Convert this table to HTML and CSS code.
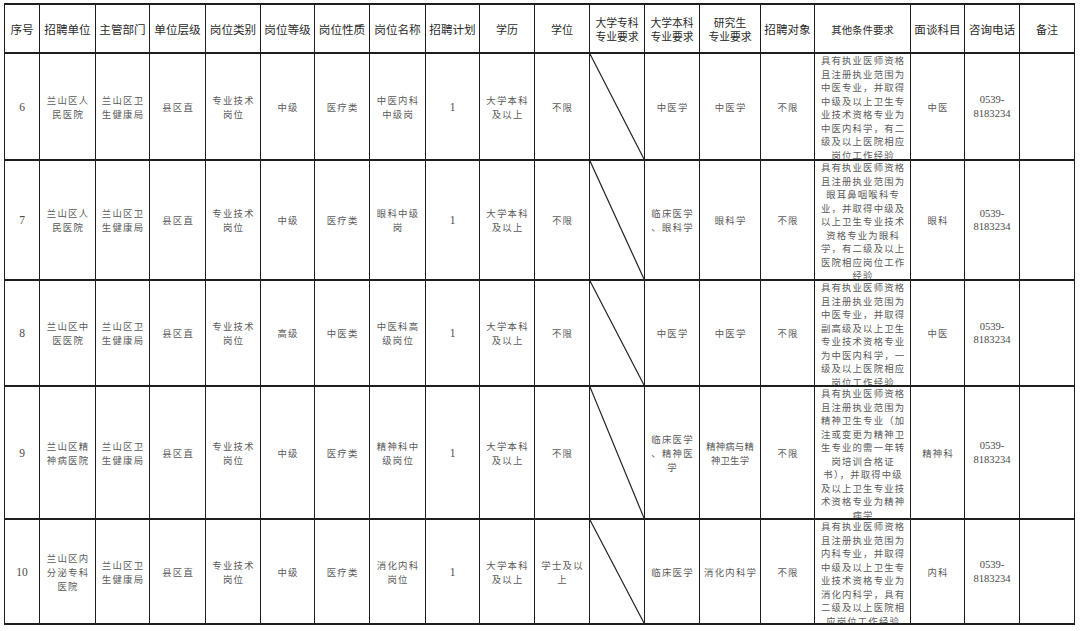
FILE: index.html
```html
<!DOCTYPE html>
<html lang="zh-CN">
<head>
<meta charset="utf-8">
<title>招聘岗位表</title>
<link rel="stylesheet" href="styles.css">
</head>
<body>
<div class="sheet" role="table">
  <div class="hd">序号</div>
  <div class="hd">招聘单位</div>
  <div class="hd">主管部门</div>
  <div class="hd">单位层级</div>
  <div class="hd">岗位类别</div>
  <div class="hd">岗位等级</div>
  <div class="hd">岗位性质</div>
  <div class="hd">岗位名称</div>
  <div class="hd">招聘计划</div>
  <div class="hd sm">学历</div>
  <div class="hd sm">学位</div>
  <div class="hd two">大学专科<br>专业要求</div>
  <div class="hd two">大学本科<br>专业要求</div>
  <div class="hd two">研究生<br>专业要求</div>
  <div class="hd">招聘对象</div>
  <div class="hd xs">其他条件要求</div>
  <div class="hd">面谈科目</div>
  <div class="hd">咨询电话</div>
  <div class="hd sm">备注</div>

  <!-- row 6 -->
  <div class="td num">6</div>
  <div class="td">兰山区人<br>民医院</div>
  <div class="td">兰山区卫<br>生健康局</div>
  <div class="td">县区直</div>
  <div class="td">专业技术<br>岗位</div>
  <div class="td">中级</div>
  <div class="td">医疗类</div>
  <div class="td">中医内科<br>中级岗</div>
  <div class="td num">1</div>
  <div class="td">大学本科<br>及以上</div>
  <div class="td">不限</div>
  <div class="td slash"><svg viewBox="0 0 100 100" preserveAspectRatio="none"><line x1="0" y1="0" x2="100" y2="100"/></svg></div>
  <div class="td">中医学</div>
  <div class="td">中医学</div>
  <div class="td">不限</div>
  <div class="td other">具有执业医师资格<br>且注册执业范围为<br>中医专业，并取得<br>中级及以上卫生专<br>业技术资格专业为<br>中医内科学，有二<br>级及以上医院相应<br>岗位工作经验</div>
  <div class="td">中医</div>
  <div class="td phone">0539-<br>8183234</div>
  <div class="td"></div>

  <!-- row 7 -->
  <div class="td num">7</div>
  <div class="td">兰山区人<br>民医院</div>
  <div class="td">兰山区卫<br>生健康局</div>
  <div class="td">县区直</div>
  <div class="td">专业技术<br>岗位</div>
  <div class="td">中级</div>
  <div class="td">医疗类</div>
  <div class="td">眼科中级<br>岗</div>
  <div class="td num">1</div>
  <div class="td">大学本科<br>及以上</div>
  <div class="td">不限</div>
  <div class="td slash"><svg viewBox="0 0 100 100" preserveAspectRatio="none"><line x1="0" y1="0" x2="100" y2="100"/></svg></div>
  <div class="td">临床医学<br>、眼科学</div>
  <div class="td">眼科学</div>
  <div class="td">不限</div>
  <div class="td other">具有执业医师资格<br>且注册执业范围为<br>眼耳鼻咽喉科专<br>业，并取得中级及<br>以上卫生专业技术<br>资格专业为眼科<br>学，有二级及以上<br>医院相应岗位工作<br>经验</div>
  <div class="td">眼科</div>
  <div class="td phone">0539-<br>8183234</div>
  <div class="td"></div>

  <!-- row 8 -->
  <div class="td num">8</div>
  <div class="td">兰山区中<br>医医院</div>
  <div class="td">兰山区卫<br>生健康局</div>
  <div class="td">县区直</div>
  <div class="td">专业技术<br>岗位</div>
  <div class="td">高级</div>
  <div class="td">中医类</div>
  <div class="td">中医科高<br>级岗位</div>
  <div class="td num">1</div>
  <div class="td">大学本科<br>及以上</div>
  <div class="td">不限</div>
  <div class="td slash"><svg viewBox="0 0 100 100" preserveAspectRatio="none"><line x1="0" y1="0" x2="100" y2="100"/></svg></div>
  <div class="td">中医学</div>
  <div class="td">中医学</div>
  <div class="td">不限</div>
  <div class="td other">具有执业医师资格<br>且注册执业范围为<br>中医专业，并取得<br>副高级及以上卫生<br>专业技术资格专业<br>为中医内科学，一<br>级及以上医院相应<br>岗位工作经验</div>
  <div class="td">中医</div>
  <div class="td phone">0539-<br>8183234</div>
  <div class="td"></div>

  <!-- row 9 -->
  <div class="td num">9</div>
  <div class="td">兰山区精<br>神病医院</div>
  <div class="td">兰山区卫<br>生健康局</div>
  <div class="td">县区直</div>
  <div class="td">专业技术<br>岗位</div>
  <div class="td">中级</div>
  <div class="td">医疗类</div>
  <div class="td">精神科中<br>级岗位</div>
  <div class="td num">1</div>
  <div class="td">大学本科<br>及以上</div>
  <div class="td">不限</div>
  <div class="td slash"><svg viewBox="0 0 100 100" preserveAspectRatio="none"><line x1="0" y1="0" x2="100" y2="100"/></svg></div>
  <div class="td">临床医学<br>、精神医<br>学</div>
  <div class="td tight">精神病与精<br>神卫生学</div>
  <div class="td">不限</div>
  <div class="td other">具有执业医师资格<br>且注册执业范围为<br>精神卫生专业（加<br>注或变更为精神卫<br>生专业的需一年转<br>岗培训合格证<br>书），并取得中级<br>及以上卫生专业技<br>术资格专业为精神<br>病学</div>
  <div class="td">精神科</div>
  <div class="td phone">0539-<br>8183234</div>
  <div class="td"></div>

  <!-- row 10 -->
  <div class="td num">10</div>
  <div class="td">兰山区内<br>分泌专科<br>医院</div>
  <div class="td">兰山区卫<br>生健康局</div>
  <div class="td">县区直</div>
  <div class="td">专业技术<br>岗位</div>
  <div class="td">中级</div>
  <div class="td">医疗类</div>
  <div class="td">消化内科<br>岗位</div>
  <div class="td num">1</div>
  <div class="td">大学本科<br>及以上</div>
  <div class="td">学士及以<br>上</div>
  <div class="td slash"><svg viewBox="0 0 100 100" preserveAspectRatio="none"><line x1="0" y1="0" x2="100" y2="100"/></svg></div>
  <div class="td">临床医学</div>
  <div class="td">消化内科学</div>
  <div class="td">不限</div>
  <div class="td other">具有执业医师资格<br>且注册执业范围为<br>内科专业，并取得<br>中级及以上卫生专<br>业技术资格专业为<br>消化内科学，具有<br>二级及以上医院相<br>应岗位工作经验</div>
  <div class="td">内科</div>
  <div class="td phone">0539-<br>8183234</div>
  <div class="td"></div>
</div>
</body>
</html>
```

FILE: styles.css
```css
html, body {
  margin: 0;
  padding: 0;
  background: #ffffff;
}

body {
  font-family: "Noto Sans CJK SC", sans-serif;
}

.sheet {
  display: grid;
  width: max-content;
  margin: 3px 0 0 4px;
  padding: 2px 1px;
  background: #1f1f1f;
  column-gap: 1px;
  row-gap: 2px;
  grid-template-columns: 34px 55px 53px 55px 54px 53px 54px 55px 53px 54px 54px 54px 54px 60px 53px 95px 53px 54px 54px;
  grid-template-rows: 47px 105px 118px 104px 131px 103px;
}

.hd,
.td {
  background: #ffffff;
  display: flex;
  align-items: center;
  justify-content: center;
  text-align: center;
  white-space: nowrap;
  overflow: hidden;
}

.hd {
  font-size: 11.6px;
  line-height: 13px;
  color: #2b2b2b;
  padding-top: 2px;
  box-sizing: border-box;
}

.hd.sm {
  font-size: 11px;
  letter-spacing: 0;
}

.hd.two {
  font-size: 10.8px;
  line-height: 13.5px;
}

.hd.xs {
  font-size: 10.4px;
}

.td {
  font-size: 9.4px;
  line-height: 14px;
  letter-spacing: 1.25px;
  padding-left: 1.25px;
  color: #5a5a5a;
  box-sizing: border-box;
}

.td.tight {
  letter-spacing: 0.2px;
  padding-left: 0.2px;
}

.td.num {
  font-family: "Liberation Serif", serif;
  font-size: 11.5px;
  letter-spacing: 0;
  padding-left: 0;
  color: #4a4a4a;
}

.td.phone {
  font-family: "Liberation Serif", serif;
  font-size: 10.6px;
  line-height: 13.5px;
  letter-spacing: 0;
  padding-left: 0;
  color: #4a4a4a;
}

.td.other {
  align-items: flex-start;
  line-height: 13.5px;
  padding-top: 0;
  letter-spacing: 1.15px;
}

.td.slash {
  padding: 0;
}

.td.slash svg {
  display: block;
  width: 100%;
  height: 100%;
}

.td.slash line {
  stroke: #222222;
  stroke-width: 1.2px;
  vector-effect: non-scaling-stroke;
}
```
